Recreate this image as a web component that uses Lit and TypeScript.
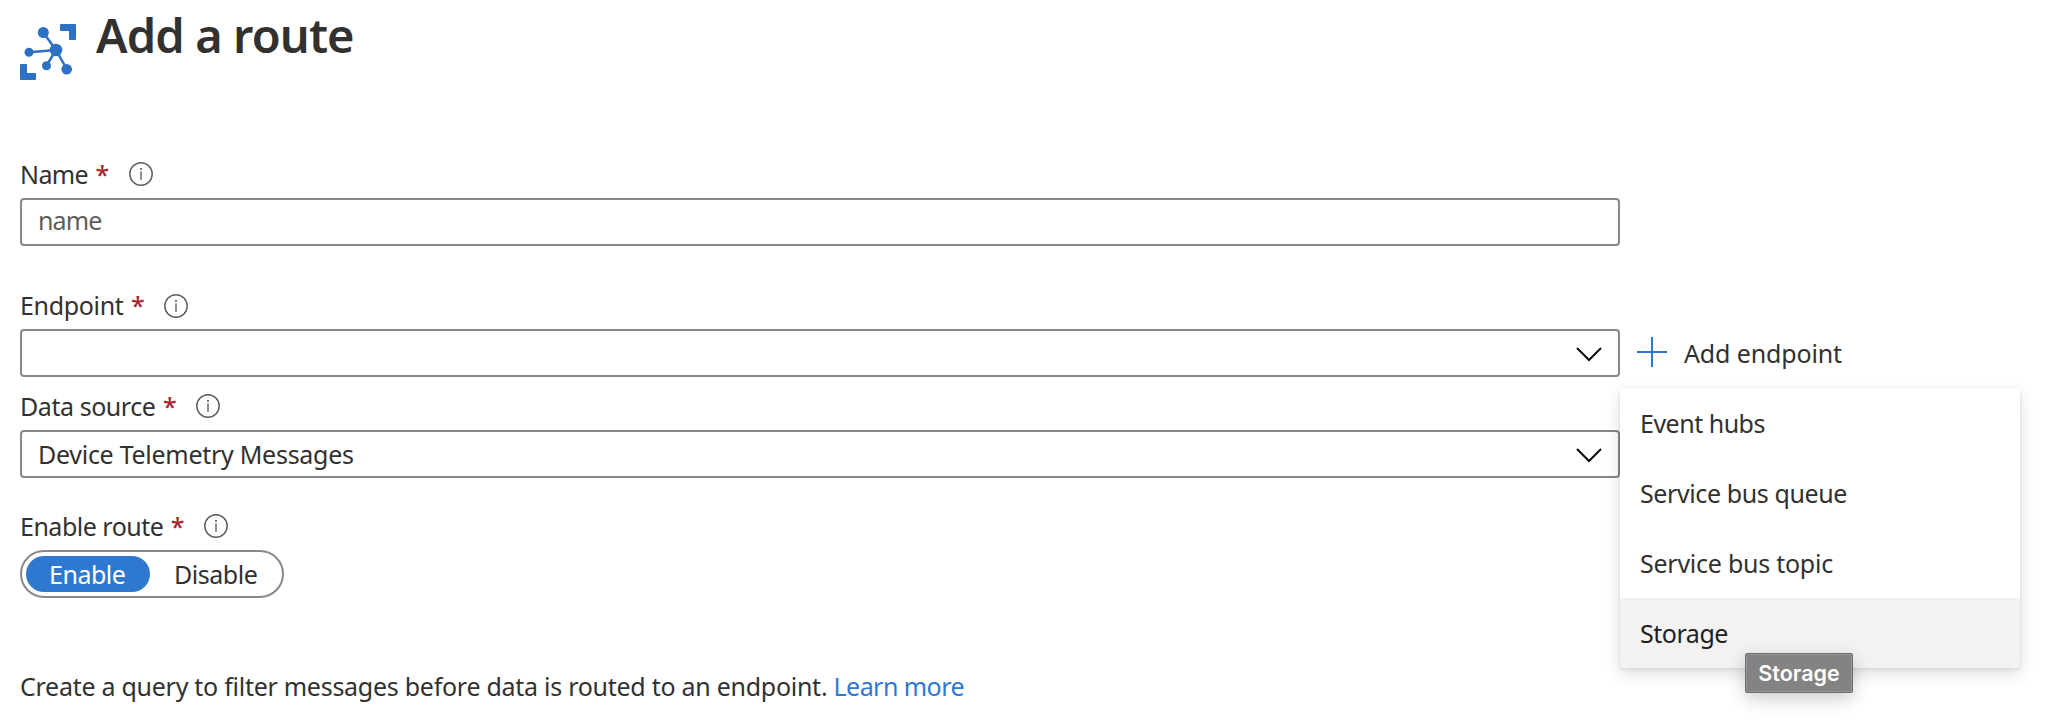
import { LitElement, html, css, svg, nothing } from "lit";
import { customElement, property, state } from "lit/decorators.js";
import { classMap } from "lit/directives/class-map.js";

const chevron = svg`<path d="M1 1 L13 13 L25 1" fill="none" stroke="#0b0b0b" stroke-width="2"/>`;

@customElement("field-label")
export class FieldLabel extends LitElement {
  @property() text = "";

  static styles = css`
    :host { display: flex; align-items: center; height: 36px; line-height: 36px; }
    .text { letter-spacing: -0.44px; white-space: nowrap; }
    :host(.tight) .text { letter-spacing: -0.6px; }
    :host(.loose) .text { letter-spacing: -0.34px; }
    :host(.snug) .text { letter-spacing: -0.5px; }
    :host(.loose) svg { margin-top: 2px; }
    .star { width: 33px; margin-left: 7.5px; color: #a4262c; font-weight: 500; }
    svg { display: block; }
  `;

  render() {
    return html`
      <span class="text">${this.text}</span><span class="star">*</span>
      <svg width="24" height="24" viewBox="0 0 24 24">
        <circle cx="12" cy="12" r="11.2" fill="none" stroke="#605e5c" stroke-width="1.5" />
        <rect x="11.1" y="6" width="1.8" height="1.8" fill="#605e5c" />
        <rect x="11.3" y="9.4" width="1.4" height="8.4" fill="#605e5c" />
      </svg>
    `;
  }
}

@customElement("app-root")
export class AppRoot extends LitElement {
  @state() private enabled = true;
  @state() private hovered = "Storage";

  private items = [
    { label: "Event hubs", cls: "hubs" },
    { label: "Service bus queue", cls: "queue" },
    { label: "Service bus topic", cls: "topic" },
    { label: "Storage", cls: "storage" },
  ];

  static styles = css`
    :host {
      display: block;
      box-sizing: border-box;
      height: 726px;
      padding: 0 30px 0 20px;
      overflow: hidden;
      background: #fff;
      color: #323130;
      font: 25px "Noto Sans", "Open Sans", sans-serif;
    }
    *, *::before { box-sizing: border-box; }
    svg { display: block; flex: none; }
    header { display: flex; height: 156px; }
    .logo { margin-top: 24px; }
    h1 {
      margin: 3px 0 0 20px;
      font-size: 47px;
      font-weight: 600;
      line-height: 64px;
      letter-spacing: -0.88px;
      white-space: nowrap;
    }
    .field { width: 1600px; }
    .box {
      display: flex;
      flex: none;
      align-items: center;
      justify-content: space-between;
      width: 1600px;
      height: 48px;
      margin-top: 6px;
      padding: 0 16px;
      border: 2px solid #8a8886;
      border-radius: 4px;
      background: #fff;
      font: inherit;
      line-height: 36px;
      color: inherit;
    }
    .value { letter-spacing: -0.28px; }
    .box svg { margin-left: auto; margin-top: 2px; }
    input.box { padding: 0 16px 4px 16px; letter-spacing: -0.9px; outline: none; }
    input.box::placeholder { color: #605e5c; opacity: 1; }
    .endpoint { margin-top: 41px; }
    .source { margin-top: 11px; }
    .toggle { margin-top: 30px; }
    .row { display: flex; position: relative; }
    .add {
      display: flex;
      flex: none;
      align-items: center;
      margin: 6px 0 0 17px;
      height: 48px;
      line-height: 36px;
      letter-spacing: -0.13px;
      white-space: nowrap;
    }
    .add svg { margin: -2px 17px 0 0; }
    .menu {
      position: absolute;
      top: 65px;
      left: 1600px;
      z-index: 1;
      width: 400px;
      background: #fff;
      box-shadow: 0 6.4px 14.4px rgba(0, 0, 0, 0.132), 0 1.2px 3.6px rgba(0, 0, 0, 0.108);
    }
    .item { height: 70px; padding: 1px 20px 0; line-height: 69px; white-space: nowrap; }
    .item.hover { background: #f3f2f1; color: #201f1e; }
    .hubs { letter-spacing: -0.5px; }
    .queue { letter-spacing: -0.4px; }
    .topic { letter-spacing: -0.25px; }
    .storage { letter-spacing: -0.47px; }
    .tip {
      position: absolute;
      left: 125px;
      top: 265px;
      width: 108px;
      height: 40px;
      border: 1px solid #6e6e6e;
      border-radius: 2px;
      background: #838383;
      box-shadow: inset 0 0 0 1px #959595, 0 6px 18px rgba(0, 0, 0, 0.2);
      color: #fff;
      font: 600 21.5px/38px Inter, "Liberation Sans", sans-serif;
      letter-spacing: 0;
      text-align: center;
    }
    .pill {
      display: flex;
      width: 264px;
      height: 48px;
      margin-top: 6px;
      padding: 4px;
      border: 2px solid #8a8886;
      border-radius: 24px;
    }
    .opt {
      width: 124px;
      height: 36px;
      padding-left: 23px;
      border-radius: 18px;
      line-height: 36px;
      letter-spacing: -0.47px;
    }
    .opt + .opt { padding-left: 24px; }
    .opt.on { background: #2f78d0; color: #fff; }
    .note { margin: 70px 0 0; line-height: 36px; letter-spacing: -0.27px; white-space: nowrap; }
    .note a { color: #2f78d0; letter-spacing: -0.55px; }
  `;

  private renderLogo() {
    return html`
      <svg class="logo" width="56" height="56" viewBox="20 24 56 56" fill="#2c71c3">
        <path d="M61 24h14a1 1 0 0 1 1 1v14a1 1 0 0 1-1 1h-5a1 1 0 0 1-1-1v-8h-8a1 1 0 0 1-1-1v-5a1 1 0 0 1 1-1z" />
        <path d="M21 64h5a1 1 0 0 1 1 1v8h8a1 1 0 0 1 1 1v5a1 1 0 0 1-1 1H21a1 1 0 0 1-1-1V65a1 1 0 0 1 1-1z" />
        <path d="M43.3 32.5L56 50M29 52.3L56 50M46.5 65.7L56 50M66.7 69L56 50" stroke="#2c71c3" stroke-width="2.5" />
        <circle cx="56" cy="50" r="6.3" />
        <circle cx="43.3" cy="32.5" r="5.5" />
        <circle cx="29" cy="52.3" r="4.5" />
        <circle cx="46.5" cy="65.7" r="4.5" />
        <circle cx="66.7" cy="69.2" r="5.3" />
      </svg>
    `;
  }

  private renderMenu() {
    return html`
      <div class="menu">
        ${this.items.map(
          (i) => html`<div
            class=${classMap({ item: true, [i.cls]: true, hover: i.label === this.hovered })}
            @mouseenter=${() => (this.hovered = i.label)}
          >${i.label}</div>`
        )}
        ${this.hovered === "Storage" ? html`<div class="tip">Storage</div>` : nothing}
      </div>
    `;
  }

  render() {
    return html`
      <header>${this.renderLogo()}<h1>Add a route</h1></header>
      <div class="field">
        <field-label class="tight" text="Name"></field-label>
        <input class="box" placeholder="name" />
      </div>
      <div class="field endpoint">
        <field-label class="loose" text="Endpoint"></field-label>
        <div class="row">
          <div class="box"><svg width="26" height="15" viewBox="0 0 26 15">${chevron}</svg></div>
          <div class="add">
            <svg width="30" height="30" viewBox="0 0 30 30">
              <path d="M15 0V30M0 15H30" stroke="#2f78d0" stroke-width="2" />
            </svg>Add endpoint
          </div>
          ${this.renderMenu()}
        </div>
      </div>
      <div class="field source">
        <field-label text="Data source"></field-label>
        <div class="box">
          <span class="value">Device Telemetry Messages</span>
          <svg width="26" height="15" viewBox="0 0 26 15">${chevron}</svg>
        </div>
      </div>
      <div class="toggle">
        <field-label class="snug" text="Enable route"></field-label>
        <div class="pill">
          <div class=${classMap({ opt: true, on: this.enabled })} @click=${() => (this.enabled = true)}>Enable</div>
          <div class=${classMap({ opt: true, on: !this.enabled })} @click=${() => (this.enabled = false)}>Disable</div>
        </div>
      </div>
      <p class="note">Create a query to filter messages before data is routed to an endpoint. <a>Learn more</a></p>
    `;
  }
}
